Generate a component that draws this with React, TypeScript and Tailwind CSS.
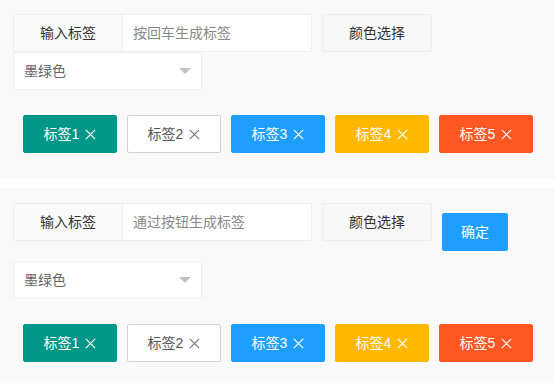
import { useState } from "react";

const tags = [
  { label: "标签1", cls: "bg-[#009688] text-white border-[#009688]" },
  { label: "标签2", cls: "bg-white text-[#555] border-[#d2d2d2]" },
  { label: "标签3", cls: "bg-[#1e9fff] text-white border-[#1e9fff]" },
  { label: "标签4", cls: "bg-[#ffb800] text-white border-[#ffb800]" },
  { label: "标签5", cls: "bg-[#ff5722] text-white border-[#ff5722]" },
];

function CloseIcon({ light }: { light: boolean }) {
  return (
    <svg width="11" height="11" viewBox="0 0 11 11" className="ml-[6px]">
      <path
        d="M0.8 0.8 L10.2 10.2 M10.2 0.8 L0.8 10.2"
        stroke={light ? "#ffffff" : "#777777"}
        strokeWidth="1.2"
        fill="none"
      />
    </svg>
  );
}

function TagRow() {
  return (
    <div className="flex gap-[10px] pl-[10px]">
      {tags.map((t) => (
        <div
          key={t.label}
          className={`flex h-[38px] w-[94px] items-center justify-center rounded-[2px] border text-[14px] ${t.cls}`}
        >
          <span>{t.label}</span>
          <CloseIcon light={t.label !== "标签2"} />
        </div>
      ))}
    </div>
  );
}

function Select() {
  return (
    <div className="flex h-[38px] w-[189px] items-center justify-between rounded-[2px] border border-[#eeeeee] bg-white pl-[10px] pr-[10px] text-[14px] text-[#666]">
      <span>墨绿色</span>
      <span className="h-0 w-0 border-x-[6px] border-t-[6px] border-x-transparent border-t-[#c2c2c2]" />
    </div>
  );
}

function InputGroup({ placeholder }: { placeholder: string }) {
  const [value, setValue] = useState("");
  return (
    <div className="flex h-[38px] w-[299px] rounded-[2px] border border-[#eeeeee] bg-white">
      <div className="flex w-[109px] items-center justify-center border-r border-[#eeeeee] bg-[#fafafa] text-[14px] text-[#333]">
        输入标签
      </div>
      <input
        value={value}
        onChange={(e) => setValue(e.target.value)}
        placeholder={placeholder}
        className="min-w-0 flex-1 bg-white pl-[10px] text-[14px] text-[#333] outline-none placeholder:text-[#888]"
      />
    </div>
  );
}

function ColorButton() {
  return (
    <button className="ml-[10px] h-[38px] w-[110px] rounded-[2px] border border-[#eeeeee] bg-[#f8f8f8] text-[14px] text-[#333]">
      颜色选择
    </button>
  );
}

export default function App() {
  return (
    <div className="min-h-screen bg-white font-['Liberation_Sans','Noto_Sans_CJK_SC',sans-serif]">
      {/* 回车生成 */}
      <section className="h-[178px] bg-[#f9f9f9] px-[13px] pt-[14px]">
        <div className="flex items-start">
          <InputGroup placeholder="按回车生成标签" />
          <ColorButton />
        </div>
        <Select />
        <div className="mt-[25px]">
          <TagRow />
        </div>
      </section>

      <div className="h-[10px] bg-white" />

      {/* 按钮生成 */}
      <section className="min-h-[195px] bg-[#f9f9f9] px-[13px] pt-[15px]">
        <div className="flex items-start">
          <InputGroup placeholder="通过按钮生成标签" />
          <ColorButton />
          <button className="ml-[10px] mt-[10px] h-[38px] w-[66px] rounded-[2px] bg-[#1e9fff] text-[14px] text-white">
            确定
          </button>
        </div>
        <div className="mt-[10px]">
          <Select />
        </div>
        <div className="mt-[25px]">
          <TagRow />
        </div>
      </section>
    </div>
  );
}
